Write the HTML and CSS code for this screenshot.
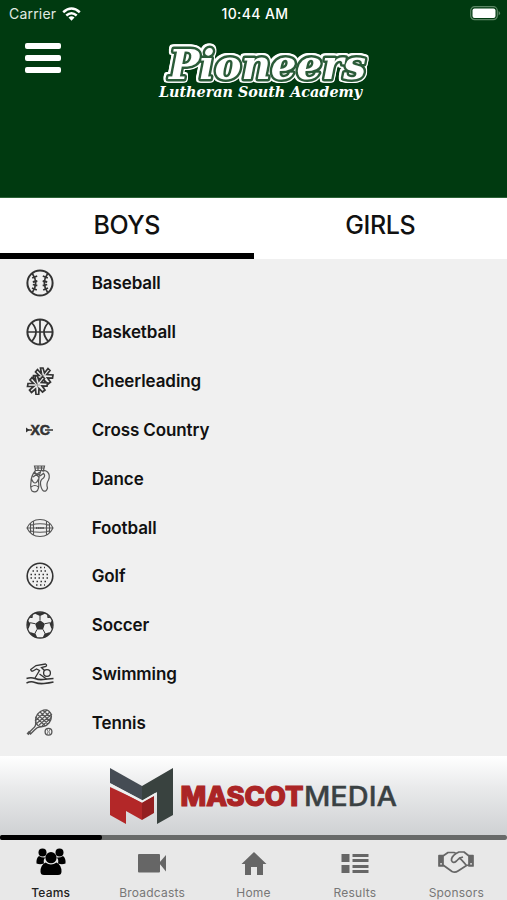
FILE: index.html
```html
<!DOCTYPE html>
<html lang="en">
<head>
<meta charset="utf-8">
<title>Pioneers - Lutheran South Academy</title>
<link rel="stylesheet" href="styles.css">
</head>
<body>
<div class="app">
  <header class="header">
    <div class="status">
      <div class="carrier">
        <span>Carrier</span>
        <svg width="19" height="14" viewBox="0 0 19 14" fill="none" stroke="#fff" stroke-width="2.5"><path d="M1.2 5.2Q9.5-2.2 17.8 5.2M4.3 8.5Q9.5 4 14.7 8.5"/><path d="M6.5 10.5Q9.5 7.8 12.5 10.5L9.5 13.8Z" fill="#fff" stroke="none"/></svg>
      </div>
      <span class="clock">10:44 AM</span>
      <svg class="battery" width="31" height="15" viewBox="0 0 31 15"><rect x=".7" y=".7" width="26.6" height="13" rx="4" fill="none" stroke="#5c8765" stroke-width="1.2"/><rect x="2.5" y="2.5" width="23" height="9.5" rx="2" fill="#fff"/><path d="M28.6 5Q31.5 7.2 28.6 9.5Z" fill="#5c8765"/></svg>
    </div>
    <div class="brand">
      <div class="menu"><i></i><i></i><i></i></div>
      <svg class="logo" width="216" height="64" viewBox="0 0 216 64">
        <text class="logo-name" x="13" y="39.500" textLength="197" lengthAdjust="spacingAndGlyphs">Pioneers</text>
        <text class="logo-sub" x="3" y="57.500" textLength="203" lengthAdjust="spacingAndGlyphs">Lutheran South Academy</text>
      </svg>
    </div>
  </header>

  <div class="tabs">
    <div class="tab active">BOYS</div>
    <div class="tab">GIRLS</div>
  </div>

  <main class="list">
    <div class="row">
      <svg class="ico" viewBox="0 0 28 28"><circle cx="14" cy="14" r="12.6" stroke-width="2"/><path d="M6.3 4.5Q13 14 6.3 23.5M21.7 4.5Q15 14 21.7 23.5" stroke-width="1.7"/><path d="M6.2 9l5-2M6.8 13l4.5-1M6.8 15.5l4.5 1.2M6 19l4.8 2M21.8 9l-5-2M21.2 13l-4.5-1M21.2 15.5l-4.5 1.2M22 19l-4.8 2" stroke-width="1.8"/></svg>
      <span>Baseball</span>
    </div>
    <div class="row">
      <svg class="ico" viewBox="0 0 28 28"><circle cx="14" cy="14" r="12.6" stroke-width="2"/><path d="M14 1v26M1 14h26M5.5 4.5Q14.5 14 5.5 23.5M22.5 4.5Q13.5 14 22.5 23.5" stroke-width="1.7"/></svg>
      <span>Basketball</span>
    </div>
    <div class="row">
      <svg class="ico" viewBox="0 0 28 28">
        <defs><path id="pom" d="M-1.500-3L-2.500-9H0L1.500-4 5-8.500 7-6.500 3.800-2.500 10-2 9.500 1.200 4.500 1 7.500 5 5 7 1.500 3.500 1.200 9.500H-1.500L-2 4-6 7.500-8 5-4 1.500-10 1.500-9.500-1.500-4-1.500-7.500-5-5.500-7.500Z"/></defs>
        <g stroke-width="1.700" fill="#f0f0f0"><use href="#pom" x="17" y="10"/><use href="#pom" x="11.500" y="18"/></g>
        <path d="M9 18h5M11.500 15.500v5M15.500 7l3 2" stroke="#999" stroke-width="1"/>
      </svg>
      <span>Cheerleading</span>
    </div>
    <div class="row">
      <svg class="ico" viewBox="0 0 28 28"><path d="M0 11.500L3.500 14 0 16.500Z" fill="#333" stroke="none"/><path d="M2 14h4M19 14h8" stroke-width="1.500"/><text class="xc" x="4.500" y="18.800" textLength="19.500" lengthAdjust="spacingAndGlyphs">XC</text></svg>
      <span>Cross Country</span>
    </div>
    <div class="row">
      <svg class="ico thin" viewBox="0 0 28 28" stroke-width="1.200"><path d="M8.500 1h10l-1 4.500h-8ZM8.500 3h10M12 1v4M15.500 1v4"/><path d="M9.500 5.500Q5 11 5 17Q4 24 6 26Q9 28 11.500 25.500Q13.500 22 12.500 17Q12.500 11 15 5.500M5.500 14Q9 22 12.500 14M5 22Q9 19 12.500 22M8 8.500l5 1M14 7l-7 5M8.500 7l5 6"/><path d="M16.500 6.500Q19 4.500 21.500 7Q24.500 10 22.500 15Q20 19 21.500 23Q20.500 27 17.500 26Q15 24 14.500 19Q14 15 17.500 13Q20 10 17 8M14 11l4-3"/></svg>
      <span>Dance</span>
    </div>
    <div class="row">
      <svg class="ico thin" viewBox="0 0 28 28" stroke-width="1.100"><path d="M1 14Q5 5.500 14 5.500T27 14Q23 22.500 14 22.500T1 14ZM1 14h26M4.500 9.500v9M7.500 7.500v13M20.500 7.500v13M23.500 9.500v9M5 11Q14 8.500 23 11M5 17Q14 19.500 23 17"/><path d="M10 14h8" stroke-width="2" stroke-dasharray="1.500 .6"/></svg>
      <span>Football</span>
    </div>
    <div class="row">
      <svg class="ico" viewBox="0 0 28 28"><circle cx="14" cy="14" r="12.8" stroke-width="1.600"/><path d="M10 5.500h9M6.500 9h16M4.500 12.500h20M4.500 16h20M6.500 19.500h16M10 23h9" stroke-width="1.500" stroke-dasharray="1.500 2.500"/></svg>
      <span>Golf</span>
    </div>
    <div class="row">
      <svg class="ico" viewBox="0 0 28 28"><circle cx="14" cy="14" r="13" stroke-width="1.300"/><path d="M14 9.200l4.900 3.500-1.900 5.700h-6l-1.900-5.700Z M8.500 2.500Q14 .3 19.500 2.500L14 5Z M1.500 9Q.2 14 2.500 18L4.500 12.500Z M26.500 9Q27.800 14 25.500 18L23.500 12.500Z M5 23.500Q7 26 11.500 27L9.500 22.800 4 21Z M23 23.500Q21 26 16.500 27L18.500 22.800 24 21Z M3.500 7L7 3.500 6.500 7Z M24.500 7L21 3.500 21.500 7Z" fill="#333" stroke="none"/><path d="M14 9V4.500M18.900 12.700l5-1M17 18.400l2.300 4.500M11 18.400l-2.300 4.500M9.100 12.700l-5-1" stroke-width="1"/></svg>
      <span>Soccer</span>
    </div>
    <div class="row">
      <svg class="ico" viewBox="0 0 28 28" stroke-width="1.300"><circle cx="21" cy="13" r="3.400"/><path d="M9 18L13.500 10.500 10.500 9 7 11Q5 11.500 4.700 9.500L10 5.500 19.500 4Q21.500 4.800 19.800 6.500L15.500 7.500 18.500 10.500M13.500 14l7 5"/><path d="M.5 18.500Q5 17 9 18.500T17 19.500T27.500 18.500M.5 23Q5 21 9 22.500T18 23.500T27.500 22" stroke-width="1.500"/></svg>
      <span>Swimming</span>
    </div>
    <div class="row">
      <svg class="ico thin" viewBox="0 0 28 28" stroke-width="1.300"><ellipse cx="17.500" cy="9.300" rx="7.200" ry="9" transform="rotate(38 17.500 9.300)"/><path d="M11 5l11 10M14 3l10 9M17 1.500l8 7M9.500 8l10 9M9 12l12-11M10 15L24 3M13 16L26 5M16 17l9-8" stroke-width="1.100"/><path d="M9.500 12.500Q10.500 17 7 19.500L3 23.500 4.500 25 8.500 21Q11.500 17.500 15.500 18"/><path d="M4 22.500l-2.500 2.800" stroke-width="2.500"/><circle cx="22.500" cy="22.800" r="3.400"/><path d="M21 20q2 2.800 0 5.500M24 20q-2 2.800 0 5.500" stroke-width=".7"/></svg>
      <span>Tennis</span>
    </div>
  </main>

  <div class="sponsor">
    <svg width="290" height="60" viewBox="0 0 290 60">
      <path d="M2 2L34 20V34L2 17Z" fill="#454c54"/>
      <path d="M34 20L65 2V49L49 58V26L34 35Z" fill="#39423f"/>
      <path d="M2 21L34 36V54L18 45V58L2 49Z" fill="#b32728"/>
      <path d="M34 36L46 30V47L34 54Z" fill="#941f20"/>
      <path d="M2 18.500L34 35.500 48 27.500" fill="none" stroke="#eff0f0" stroke-width="2"/>
      <text class="mascot" x="72.500" y="40" textLength="123" lengthAdjust="spacingAndGlyphs">MASCOT</text>
      <text class="media" x="196" y="40" textLength="93" lengthAdjust="spacingAndGlyphs">MEDIA</text>
    </svg>
  </div>

  <div class="progress"><div class="thumb"></div></div>

  <nav class="nav">
    <div class="item active">
      <svg width="30" height="28" viewBox="0 0 30 28" fill="#000"><circle cx="6.500" cy="4.500" r="4"/><circle cx="23.500" cy="4.500" r="4"/><path d="M3 8Q0 10 .5 15.500Q4 17 8 15.500Q7 11 9.500 9.500Q6 10 3 8ZM27 8Q30 10 29.500 15.500Q26 17 22 15.500Q23 11 20.500 9.500Q24 10 27 8Z"/><circle cx="15" cy="9.700" r="5.600"/><path d="M9.500 14.500Q15 18.500 20.500 14.500Q25.500 17 25.500 23.500Q25.500 27 22 27H8Q4.500 27 4.500 23.500Q4.500 17 9.500 14.500Z"/></svg>
      <span>Teams</span>
    </div>
    <div class="item">
      <svg width="30" height="28" viewBox="0 0 30 28" fill="#666"><rect x="1" y="6" width="22" height="18.500" rx="1"/><path d="M22 15L29 7V23.500Z"/></svg>
      <span>Broadcasts</span>
    </div>
    <div class="item">
      <svg width="30" height="28" viewBox="0 0 30 28" fill="#666"><path d="M15 4L27.500 16H24V27H18V19H12V27H6V16H2.500Z"/></svg>
      <span>Home</span>
    </div>
    <div class="item">
      <svg width="30" height="28" viewBox="0 0 30 28" fill="#666"><path d="M1.500 6h8v8h-8ZM1.500 17h8v8h-8ZM12.500 6h16v3h-16ZM12.500 11h16v3h-16ZM12.500 17h16v3h-16ZM12.500 22h16v3h-16Z"/></svg>
      <span>Results</span>
    </div>
    <div class="item">
      <svg width="36" height="28" viewBox="0 0 36 28" fill="none" stroke="#666" stroke-width="1.700" stroke-linejoin="round"><path d="M1 7.500h4v10.500h-4ZM31 7.500h4v10.500h-4Z" fill="#666"/><path d="M5 8L10 4.500H16L18 5.500L21 4H26L31 8M5 17L14 23.500Q17 25 20 23L28.500 17.500 31 17M18 5.500Q13 9 13.500 12.500Q15 16 18.500 13L21.500 10Q23 11 28.500 17.500M21.500 10L25 9"/><path d="M3 15.800h.1M33 15.800h.1" stroke="#e8e8e8" stroke-linecap="round"/></svg>
      <span>Sponsors</span>
    </div>
  </nav>
</div>
</body>
</html>
```
FILE: styles.css
```css
* { box-sizing: border-box; }
body { margin: 0; font-family: Inter, "Liberation Sans", sans-serif; color: #111; }
svg { display: block; flex: none; }
.app { width: 507px; height: 900px; display: flex; flex-direction: column; background: #f0f0f0; overflow: hidden; }

.header { height: 198px; background: #003a10; border-bottom: 1px solid #2c6338; color: #fff; }
.status { height: 28px; padding: 0 6px 1px 9px; display: grid; grid-template-columns: 1fr auto 1fr; align-items: center; font-size: 14px; }
.carrier { display: flex; align-items: center; gap: 6px; color: #e1ebe3; letter-spacing: .2px; }
.clock { font-weight: 500; font-size: 14px; letter-spacing: .4px; }
.battery { justify-self: end; }
.brand { display: flex; align-items: flex-start; padding: 11px 0 0 25px; }
.menu { width: 36px; display: flex; flex-direction: column; gap: 5.500px; padding-top: 4px; }
.menu i { height: 6.300px; border-radius: 2px; background: #fff; }
.logo { margin-left: 95px; overflow: visible; }
.logo-name {
  font: italic bold 41px "DejaVu Serif", serif;
  fill: #fff;
  stroke: #2a5b38;
  stroke-width: 5px;
  stroke-linejoin: round;
  paint-order: stroke;
  filter: drop-shadow(1px 0 0 #fff) drop-shadow(-1.500px 0 0 #fff) drop-shadow(0 1px 0 #fff) drop-shadow(0 -1.500px 0 #fff);
}
.logo-sub { font: italic bold 15px "DejaVu Serif", serif; fill: #fff; }

.tabs { height: 61px; display: flex; background: #fff; }
.tab { flex: 1; padding-bottom: 7px; display: flex; align-items: center; justify-content: center; font-size: 25px; font-weight: 500; letter-spacing: -.4px; border-bottom: 0 solid #000; }
.tab.active { padding-bottom: 1px; border-bottom-width: 6px; }

.list { height: 497px; }
.row { height: 48.850px; display: flex; align-items: center; gap: 37.700px; padding-left: 26px; font-size: 17px; font-weight: 600; letter-spacing: -.1px; }
.ico { width: 28px; height: 28px; fill: none; stroke: #333; }
.ico.thin { stroke: #555; }
.xc { font: bold 14px "Liberation Sans", sans-serif; fill: #333; stroke: #333; stroke-width: .5px; }

.sponsor { height: 79px; padding: 10px 0 0 108px; background: linear-gradient(#fff, #e9eaeb 40%, #cfd1d3); }
.mascot { font: 800 27px Inter, sans-serif; fill: #ab2526; stroke: #ab2526; stroke-width: 1.200px; }
.media { font: 500 27px Inter, sans-serif; fill: #3a4143; stroke: #3a4143; stroke-width: .4px; }

.progress { height: 5px; background: #686a69; border-radius: 2px; }
.thumb { width: 102px; height: 5px; background: #000; border-radius: 2px; }

.nav { height: 60px; display: flex; background: #e8e8e8; }
.item { flex: 1; display: flex; flex-direction: column; align-items: center; padding-top: 8px; gap: 8.500px; font-size: 12px; line-height: 16px; color: #777; letter-spacing: .2px; }
.item.active { color: #222; font-weight: 500; }
```
